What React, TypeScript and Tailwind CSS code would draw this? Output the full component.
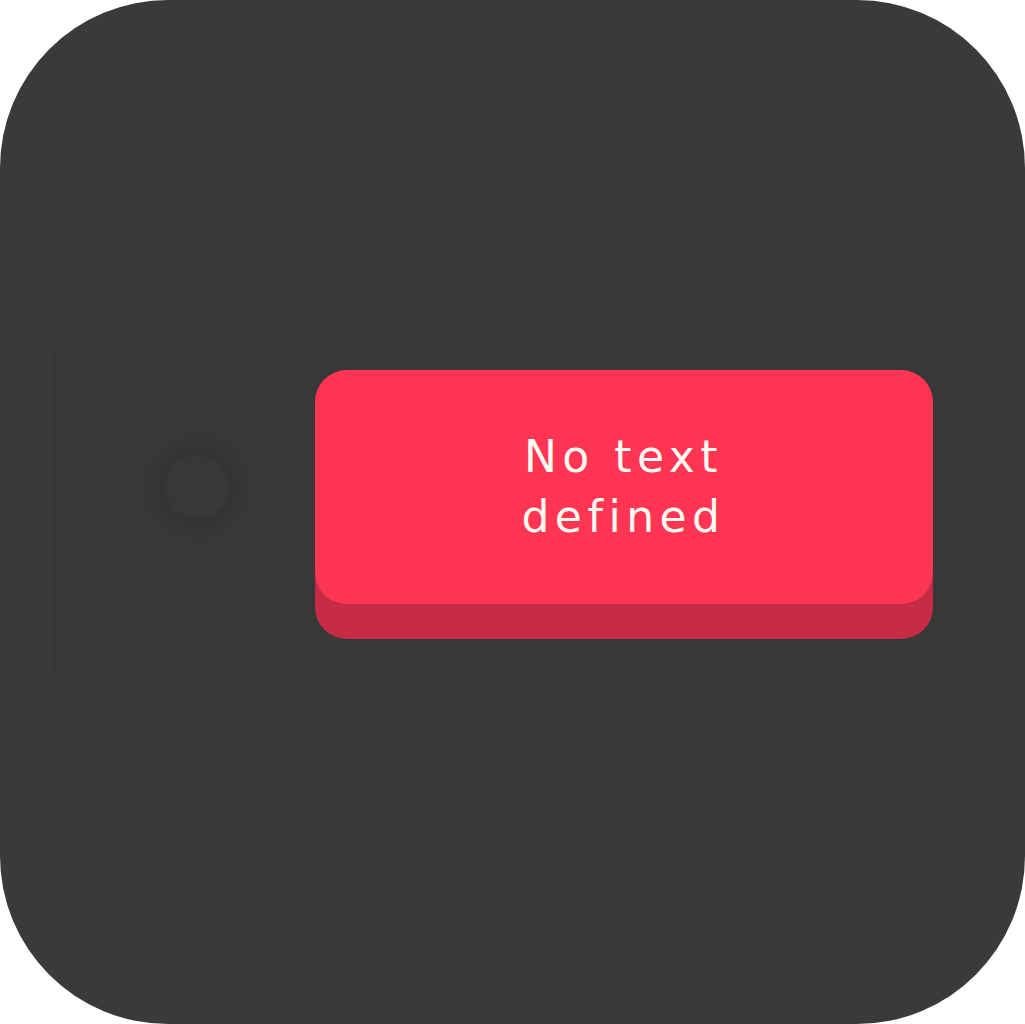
export default function App() {
  return (
    <div className="w-[1025px] h-[1024px] bg-white">
      <div className="w-full h-full rounded-[168px] bg-[#3a3a3a] flex items-center justify-center">
        <div className="w-[924px] h-[327px] bg-[#383838] flex items-start">
          <div className="ml-[111px] mt-[103px] w-[70px] h-[70px] rounded-full bg-[#383838] border-[4px] border-[#353535] shadow-[0_0_16px_4px_rgba(0,0,0,0.1)] shrink-0" />
          <div className="ml-[83px] mt-[21px] w-[618px] h-[234px] rounded-[32px] bg-[#ff3553] shadow-[0_35px_0_#c72c46] flex items-center justify-center shrink-0">
            <span
              className="max-w-[240px] text-center text-[44px] leading-[60px] tracking-[5.5px] text-[#fffaf2]"
              style={{ fontFamily: '"DejaVu Sans", Verdana, sans-serif' }}
            >
              No text defined
            </span>
          </div>
        </div>
      </div>
    </div>
  );
}
